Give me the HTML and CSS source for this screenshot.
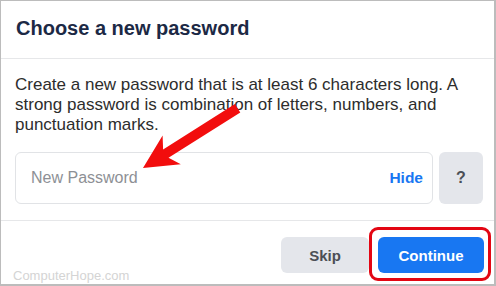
FILE: index.html
```html
<!DOCTYPE html>
<html>
<head>
<meta charset="utf-8">
<link rel="stylesheet" href="styles.css">
</head>
<body>
<div class="card">
  <div class="header">
    <h1 class="title">Choose a new password</h1>
  </div>
  <div class="body">
    <p class="desc">Create a new password that is at least 6 characters long. A strong password is combination of letters, numbers, and punctuation marks.</p>
    <div class="row">
      <div class="field">
        <span class="placeholder">New Password</span>
        <span class="hide">Hide</span>
      </div>
      <div class="help">?</div>
    </div>
  </div>
  <div class="footer">
    <div class="btn btn-skip">Skip</div>
    <div class="btn btn-continue">Continue</div>
  </div>
  <div class="watermark">ComputerHope.com</div>
  <div class="highlight"></div>
  <svg class="arrow" width="496" height="286" viewBox="0 0 496 286">
    <polygon points="143,168 162.6,135.4 163.1,149.4 234.9,104 240.3,112.4 168.5,157.8 180.8,164.2" fill="#f20d0d"/>
  </svg>
</div>
</body>
</html>
```
FILE: styles.css
```css
* { box-sizing: border-box; }
html, body { margin: 0; padding: 0; background: #fff; }
body { font-family: "Liberation Sans", Arial, sans-serif; }

.card {
  position: relative;
  width: 496px;
  height: 286px;
  border: 1px solid #bcbcbc;
  border-right-width: 2px;
  border-bottom-width: 2px;
  background: #fff;
  display: flex;
  flex-direction: column;
}

.header {
  padding: 16px 16px 18px 15px;
  border-bottom: 1px solid #e6e7e9;
}
.title {
  margin: 0;
  font-size: 20px;
  line-height: 23px;
  font-weight: bold;
  color: #1c2945;
}

.body {
  padding: 16px 11px 16px 14px;
  border-bottom: 1px solid #e6e7e9;
}
.desc {
  margin: 0 0 17px 0;
  font-size: 17px;
  line-height: normal;
  color: #2d2d2d;
}

.row {
  display: flex;
  gap: 6px;
  height: 52px;
}
.field {
  flex: 1;
  border: 1px solid #e1e3e6;
  border-radius: 6px;
  display: flex;
  align-items: center;
  justify-content: space-between;
  padding: 0 9px 0 15px;
}
.placeholder {
  font-size: 16px;
  color: #8d9095;
}
.hide {
  font-size: 15.5px;
  font-weight: bold;
  color: #1877f2;
}
.help {
  width: 44px;
  border-radius: 6px;
  background: #e4e6eb;
  display: flex;
  align-items: center;
  justify-content: center;
  font-size: 16px;
  font-weight: bold;
  color: #4b4f56;
}

.footer {
  flex: 1;
  display: flex;
  justify-content: flex-end;
  align-items: flex-start;
  gap: 9px;
  padding: 16px 10px 0 0;
}
.btn {
  height: 36px;
  border-radius: 6px;
  display: flex;
  align-items: center;
  justify-content: center;
  font-size: 15px;
  font-weight: bold;
}
.btn-skip {
  width: 88px;
  background: #e4e6eb;
  color: #4b4f56;
}
.btn-continue {
  width: 106px;
  background: #1877f2;
  color: #fff;
}

.watermark {
  position: absolute;
  left: 12px;
  top: 267px;
  font-size: 13px;
  color: #d4d4d4;
}
.highlight {
  position: absolute;
  left: 368px;
  top: 226px;
  width: 122px;
  height: 54px;
  border: 3px solid #e30613;
  border-radius: 9px;
}
.arrow {
  position: absolute;
  left: -1px;
  top: -1px;
}
```
